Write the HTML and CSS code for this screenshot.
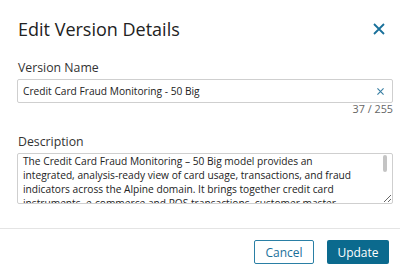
FILE: index.html
```html
<!DOCTYPE html>
<html>

<head>
    <meta name="viewport" content="width=device-width, initial-scale=1">
    <title>Edit Version Details</title>
    <link rel="stylesheet" href="styles.css">
</head>

<body>
    <div class="dialog">
        <div class="dialog-header">
            <h1 class="dialog-title">Edit Version Details</h1>
            <button class="close-button" type="button" aria-label="Close">
                <svg width="12" height="12" viewBox="0 0 12 12">
                    <path d="M1 1 L11 11 M11 1 L1 11" stroke="currentColor" stroke-width="1.8" fill="none" />
                </svg>
            </button>
        </div>

        <form class="dialog-body">
            <label class="field-label" for="versionName">Version Name</label>
            <span class="text-input-wrapper">
                <input class="text-input" id="versionName" type="text" name="versionName"
                    value="Credit Card Fraud Monitoring - 50 Big"></input>
                <button class="clear-button" type="button" aria-label="Clear">
                    <svg width="7" height="7" viewBox="0 0 8 8">
                        <path d="M0.5 0.5 L7.5 7.5 M7.5 0.5 L0.5 7.5" stroke="currentColor" stroke-width="1.3" fill="none" />
                    </svg>
                </button>
            </span>
            <div class="char-count">37 / 255</div>

            <label class="field-label description-label" for="description">Description</label>
            <span class="description-wrapper">
                <textarea class="description-input" id="description" name="description">The Credit Card Fraud Monitoring – 50 Big model provides an integrated, analysis-ready view of card usage, transactions, and fraud indicators across the Alpine domain. It brings together credit card instruments, e-commerce and POS transactions, customer master data, merchant reference data and fraud alerts so analysts can investigate suspicious activity quickly.</textarea>
                <span class="scroll-thumb"></span>
            </span>
        </form>

        <div class="dialog-footer">
            <button class="cancel-button" type="button">Cancel</button>
            <button class="update-button" type="submit">Update</button>
        </div>
    </div>
</body>

</html>
```

FILE: styles.css
```css
body {
    margin: 0;
    background: white;
    font-family: "Open Sans", "Liberation Sans", sans-serif;
    color: #222;
}

.dialog {
    width: 400px;
    height: 272px;
    display: flex;
    flex-direction: column;
}

.dialog-header {
    display: flex;
    justify-content: space-between;
    align-items: center;
    padding: 16px 15px 0 18px;
}

.dialog-title {
    margin: 0;
    font-size: 18px;
    font-weight: 400;
    line-height: 26px;
}

.close-button {
    border: none;
    background: none;
    padding: 0;
    color: #19709a;
    display: flex;
}

.dialog-body {
    display: flex;
    flex-direction: column;
    padding: 18px 7px 0 17px;
}

.field-label {
    font-size: 12.3px;
    line-height: 15px;
    color: #333;
    margin-bottom: 4px;
    padding-left: 1px;
}

.description-label {
    margin-top: 19px;
}

.text-input-wrapper {
    display: flex;
    align-items: center;
    height: 22px;
    border: 1px solid #cfcfcf;
    border-radius: 2px;
}

.text-input {
    flex: 1;
    min-width: 0;
    border: none;
    outline: none;
    padding: 0 5px;
    font-family: inherit;
    font-size: 10.2px;
    color: #222;
}

.clear-button {
    border: none;
    background: none;
    padding: 0 8px 0 0;
    color: #3a7fa3;
    display: flex;
}

.char-count {
    align-self: flex-end;
    font-size: 10.8px;
    line-height: 12px;
    color: #666;
}

.description-wrapper {
    position: relative;
    display: flex;
}

.description-input {
    flex: 1;
    height: 51px;
    box-sizing: border-box;
    border: 1px solid #cfcfcf;
    border-radius: 2px;
    padding: 0 32px 0 5px;
    font-family: inherit;
    font-size: 10.2px;
    color: #222;
    outline: none;
    overflow: hidden;
    resize: vertical;
}

.scroll-thumb {
    position: absolute;
    top: 2px;
    right: 6px;
    width: 4px;
    height: 17px;
    border-radius: 2px;
    background: #c4c4c4;
}

.dialog-footer {
    margin-top: auto;
    display: flex;
    justify-content: flex-end;
    gap: 13px;
    border-top: 1px solid #e4e4e4;
    padding: 11px 11px 8px;
}

.cancel-button,
.update-button {
    height: 24px;
    padding: 0;
    border-radius: 2px;
    font-family: inherit;
    font-size: 12px;
}

.cancel-button {
    width: 60px;
    color: #19709a;
    background: white;
    border: 1px solid #2a7fa5;
}

.update-button {
    width: 62px;
    color: white;
    background-color: #0b6a8e;
    border: none;
}
```
